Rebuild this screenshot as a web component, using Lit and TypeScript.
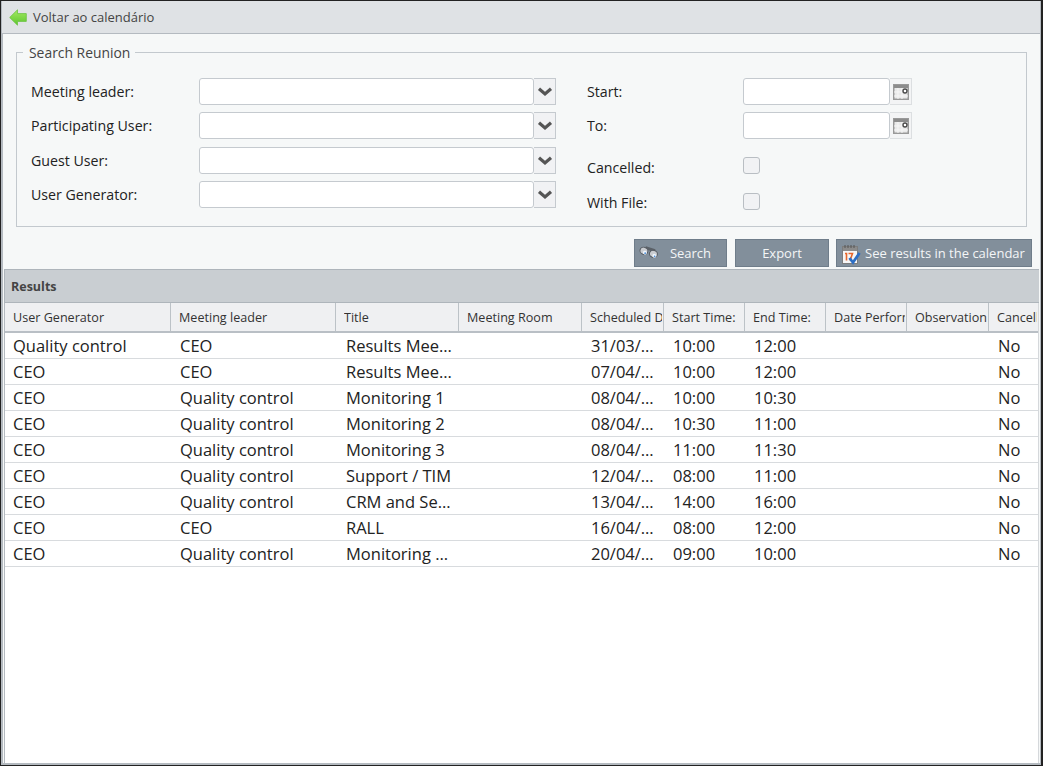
import { LitElement, html, css, svg } from "lit";
import { customElement } from "lit/decorators.js";

const COLS = [
  "User Generator", "Meeting leader", "Title", "Meeting Room", "Scheduled Date",
  "Start Time:", "End Time:", "Date Performed", "Observation", "Cancelled",
];
const ROWS = [
  ["Quality control", "CEO", "Results Meeting", "", "31/03/2016", "10:00", "12:00", "", "", "No"],
  ["CEO", "CEO", "Results Meeting", "", "07/04/2016", "10:00", "12:00", "", "", "No"],
  ["CEO", "Quality control", "Monitoring 1", "", "08/04/2016", "10:00", "10:30", "", "", "No"],
  ["CEO", "Quality control", "Monitoring 2", "", "08/04/2016", "10:30", "11:00", "", "", "No"],
  ["CEO", "Quality control", "Monitoring 3", "", "08/04/2016", "11:00", "11:30", "", "", "No"],
  ["CEO", "Quality control", "Support / TIM", "", "12/04/2016", "08:00", "11:00", "", "", "No"],
  ["CEO", "Quality control", "CRM and Services", "", "13/04/2016", "14:00", "16:00", "", "", "No"],
  ["CEO", "CEO", "RALL", "", "16/04/2016", "08:00", "12:00", "", "", "No"],
  ["CEO", "Quality control", "Monitoring Final", "", "20/04/2016", "09:00", "10:00", "", "", "No"],
];

@customElement("app-root")
export class AppRoot extends LitElement {
  static styles = css`
    :host { display: block; width: 1044px; height: 766px; background: #fff; font-family: "Open Sans", "Noto Sans", sans-serif; color: #333; }
    * { box-sizing: border-box; }
    .frame { width: 1043px; height: 766px; border: 1px solid #222; border-right-width: 2px; background: #f6f8f8; display: flex; flex-direction: column; overflow: hidden; }
    .inner { flex: 1; display: flex; flex-direction: column; min-height: 0; border-right: 1px solid #b4bac0; border-left: 2px solid #b4bac0; border-bottom: 2px solid #b4bac0; }
    .top { height: 33px; background: #dfe2e5; border-bottom: 1px solid #b4bac0; display: flex; align-items: center; gap: 6px; padding-left: 7px; font-size: 13px; color: #444; flex: none; margin-left: -1px; }
    .main { flex: none; height: 235px; padding: 18px 13px 0 13px; display: flex; flex-direction: column; }
    .set { height: 175px; border: 1px solid #c3c9ce; position: relative; display: flex; flex: none; }
    .legend { font-size: 13.9px; color: #444; padding: 0 5px 0 6px; line-height: 17px; position: absolute; top: -9px; left: 6px; background: #f6f8f8; }
    .col { display: grid; align-content: start; padding-top: 25px; }
    .left { width: 570px; padding-left: 14px; grid-template-columns: 168px 357px; row-gap: 7px; }
    .right { grid-template-columns: 156px 169px; }
    .lab { font-size: 14.2px; color: #222; display: flex; align-items: center; height: 27px; }
    .field { display: flex; height: 27px; }
    .input { flex: 1; background: #fff; border: 1px solid #c5cacf; border-radius: 3px; }
    .dd { width: 22px; background: #f1f2f4; border: 1px solid #c5cacf; border-left: none; display: flex; align-items: center; justify-content: center; flex: none; }
    .cal { width: 22px; background: #f3f4f5; border: 1px solid #dcdfe1; border-left: none; display: flex; align-items: center; justify-content: center; flex: none; }
    .chk { width: 17px; height: 17px; background: #f1f2f4; border: 1px solid #b9bec3; border-radius: 3px; align-self: center; }
    .g3 { margin-top: 1px; }
    .s2 { margin-top: 7px; }
    .s3 { margin-top: 13px; }
    .s4 { margin-top: 9px; }
    .nudge3 { padding-top: 3px; }
    .nudge1 { padding-top: 1px; }
    .buttons { display: flex; justify-content: flex-end; gap: 8px; margin-top: 12px; margin-right: -5px; flex: none; }
    .buttons .btn:nth-child(2) { margin-right: -1px; }
    .btn { height: 28px; background: #828f9b; border: 1px solid #6f7d8a; color: #f4f6f7; font-size: 13px; display: flex; align-items: center; justify-content: center; position: relative; }
    .btn svg { position: absolute; }
    .b-search { width: 93px; }
    .b-export { width: 94px; }
    .b-cal { width: 196px; }
    .b-search svg { left: 3px; top: 6px; }
    .b-cal svg { left: 5px; top: 4px; }
    .b-search span { margin-left: 20px; }
    .b-cal span { margin-left: 22px; }
    .results { flex: none; height: 34px; margin-left: 1px; margin-right: 1px; background: #c9ced2; border: 1px solid #aeb5bb; border-right: none; display: flex; align-items: center; padding-left: 6px; font-size: 12.5px; font-weight: 700; color: #444; }
    .table { flex: 1; background: #fff; min-height: 0; margin-left: 1px; margin-right: 1px; border-left: 1px solid #b4bac0; border-right: 1px solid #d5d8db; overflow: hidden; }
    .row { display: grid; grid-template-columns: 166px 165px 123px 123px 82px 81px 81px 81px 82px 50px; }
    .head { height: 30px; background: #eff0f2; border-bottom: 2px solid #b9bfc5; }
    .hc { font-size: 12.6px; color: #333; border-right: 1px solid #bcc2c7; padding: 1px 1px 0 8px; display: flex; align-items: center; white-space: nowrap; min-width: 0; }
    .hc span { display: block; overflow: hidden; width: 100%; }
    .hc:last-child { border-right: none; padding-right: 2px; }
    .data { height: 26px; border-bottom: 1px solid #d8dbde; }
    .td { font-size: 16.5px; color: #222; padding-left: 9px; display: flex; align-items: center; overflow: hidden; white-space: nowrap; min-width: 0; }
    .td:first-child { padding-left: 8px; }
    .td:nth-child(3) { padding-left: 10px; }
    .td span { display: block; overflow: hidden; text-overflow: ellipsis; padding-right: 5px; width: 100%; }
  `;

  chevron() {
    return svg`<svg width="16" height="10" viewBox="0 0 16 10"><path d="M2 1.8 L8 7 L14 1.8" fill="none" stroke="#555" stroke-width="3.2"/></svg>`;
  }
  calIcon() {
    return svg`<svg width="16" height="16" viewBox="0 0 16 16"><rect x="0.75" y="0.75" width="14.5" height="14.5" fill="#e9e9e9" stroke="#999" stroke-width="1.5"/><rect x="1" y="1" width="14" height="3" fill="#8c8c8c"/><path d="M5 4v11M9 4v11M1 8h14M1 12h14" stroke="#f6f6f6"/><circle cx="12" cy="7" r="2" fill="#fff" stroke="#4a4a4a" stroke-width="1.4"/></svg>`;
  }
  ddField(cls = "") {
    return html`<div class="field ${cls}"><div class="input"></div><div class="dd">${this.chevron()}</div></div>`;
  }
  calField(cls = "") {
    return html`<div class="field ${cls}"><div class="input"></div><div class="cal">${this.calIcon()}</div></div>`;
  }

  render() {
    return html`<div class="frame"><div class="inner">
      <div class="top">
        <svg width="18" height="17" viewBox="0 0 18 17">
          <defs><linearGradient id="ga" x1="0" y1="0" x2="0" y2="1"><stop offset="0" stop-color="#a4ea62"/><stop offset="1" stop-color="#5cc52f"/></linearGradient></defs>
          <path d="M0.7 8.5 L8.5 0.8 V4.6 H17.3 V12.4 H8.5 V16.2 Z" fill="url(#ga)" stroke="#6cc342" stroke-width="0.8" stroke-linejoin="round"/>
        </svg>
        <span>Voltar ao calendário</span>
      </div>
      <div class="main">
        <div class="set">
          <div class="legend">Search Reunion</div>
          <div class="col left">
            <div class="lab">Meeting leader:</div>${this.ddField()}
            <div class="lab">Participating User:</div>${this.ddField()}
            <div class="lab g3">Guest User:</div>${this.ddField("g3")}
            <div class="lab">User Generator:</div>${this.ddField()}
          </div>
          <div class="col right">
            <div class="lab">Start:</div>${this.calField()}
            <div class="lab s2">To:</div>${this.calField("s2")}
            <div class="lab s3 nudge3">Cancelled:</div><div class="field s3"><div class="chk"></div></div>
            <div class="lab s4 nudge1">With File:</div><div class="field s4"><div class="chk"></div></div>
          </div>
        </div>
        <div class="buttons">
          <div class="btn b-search">
            <svg width="22" height="15" viewBox="0 0 22 15">
              <g transform="rotate(18 11 7)">
                <path d="M6 3 H16" stroke="#5b6168" stroke-width="3"/>
                <ellipse cx="5.5" cy="6.5" rx="4" ry="3.6" fill="#c9ccd0" stroke="#555b62" stroke-width="1"/>
                <ellipse cx="15.5" cy="6.5" rx="4" ry="3.6" fill="#c9ccd0" stroke="#555b62" stroke-width="1"/>
                <circle cx="7" cy="8" r="2" fill="#eef5fc"/><circle cx="17" cy="8" r="2" fill="#eef5fc"/>
                <circle cx="7.4" cy="8.4" r="0.9" fill="#4f8fd8"/><circle cx="17.4" cy="8.4" r="0.9" fill="#4f8fd8"/>
              </g>
            </svg>
            <span>Search</span>
          </div>
          <div class="btn b-export">Export</div>
          <div class="btn b-cal">
            <svg width="19" height="21" viewBox="0 0 19 21">
              <rect x="0.5" y="2.5" width="15" height="17" fill="#f6f6f6" stroke="#7d7d7d"/>
              <rect x="1" y="3" width="14" height="4" fill="#8b8b8b"/>
              <path d="M3 1v3M6 1v3M9 1v3M12 1v3" stroke="#555" stroke-width="1"/>
              <path d="M3 9.5h1.5v7M6.5 9.5h4l-2.5 7" fill="none" stroke="#e8662a" stroke-width="1.6"/>
              <path d="M7.5 14 L11 18.5 L17.5 9" fill="none" stroke="#2d6fc4" stroke-width="2.8"/>
            </svg>
            <span>See results in the calendar</span>
          </div>
        </div>
      </div>
      <div class="results">Results</div>
      <div class="table">
        <div class="row head">${COLS.map((c) => html`<div class="hc"><span>${c}</span></div>`)}</div>
        ${ROWS.map((r) => html`<div class="row data">${r.map((v) => html`<div class="td"><span>${v}</span></div>`)}</div>`)}
      </div>
    </div></div>`;
  }
}
